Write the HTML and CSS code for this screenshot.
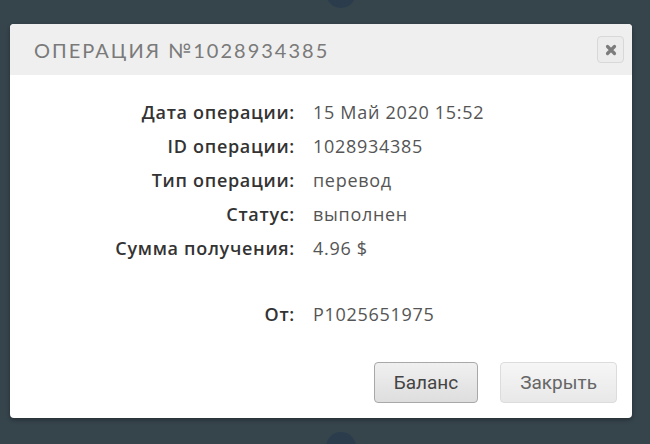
FILE: index.html
```html
<!DOCTYPE html>
<html lang="ru">
<head>
    <meta charset="UTF-8">
    <title>Операция</title>
    <link rel="stylesheet" href="styles.css">
</head>
<body>
    <div class="backdrop">
        <div class="dot dot-top"></div>
        <div class="dot dot-bottom"></div>
        <div class="dialog">
            <div class="dialog-header">
                <h1>Операция №1028934385</h1>
                <button class="close-btn" aria-label="Закрыть">
                    <svg width="12" height="12" viewBox="0 0 12 12"><path d="M2.5 2.5 L9.5 9.5 M9.5 2.5 L2.5 9.5" stroke="#7c7c7c" stroke-width="3.2" stroke-linecap="round"/></svg>
                </button>
            </div>
            <div class="dialog-body">
                <div class="info">
                    <div class="label">Дата операции:</div><div class="value">15 Май 2020 15:52</div>
                    <div class="label">ID операции:</div><div class="value">1028934385</div>
                    <div class="label">Тип операции:</div><div class="value">перевод</div>
                    <div class="label">Статус:</div><div class="value">выполнен</div>
                    <div class="label">Сумма получения:</div><div class="value">4.96 $</div>
                    <div class="spacer"></div>
                    <div class="label">От:</div><div class="value">P1025651975</div>
                </div>
            </div>
            <div class="dialog-footer">
                <button class="btn btn-active">Баланс</button>
                <button class="btn">Закрыть</button>
            </div>
        </div>
    </div>
</body>
</html>
```

FILE: styles.css
```css
html, body {
    margin: 0;
    padding: 0;
}

body {
    background-color: #36444c;
    font-family: 'Open Sans', sans-serif;
    width: 650px;
    height: 444px;
    overflow: hidden;
}

.backdrop {
    position: relative;
    height: 444px;
    padding: 24px 18px 0 10px;
    box-sizing: border-box;
}

.dot {
    position: absolute;
    width: 30px;
    height: 30px;
    border-radius: 50%;
    background: #2b3d4d;
    left: 326px;
}

.dot-top {
    top: -22px;
}

.dot-bottom {
    top: 432px;
}

.dialog {
    position: relative;
    background: white;
    border-radius: 4px;
    height: 394px;
    display: flex;
    flex-direction: column;
    box-shadow: 0 2px 4px rgba(0, 0, 0, 0.3);
}

.dialog-header {
    background: #efefef;
    height: 51px;
    border-radius: 4px 4px 0 0;
    display: flex;
    align-items: center;
    justify-content: space-between;
    padding: 0 8px 0 24px;
}

.dialog-header h1 {
    margin: 0;
    font-family: 'Lato', sans-serif;
    font-weight: 400;
    font-size: 20px;
    letter-spacing: 2px;
    text-transform: uppercase;
    color: #7a7a7a;
}

.close-btn {
    width: 27px;
    height: 27px;
    background: #ececec;
    border: 1px solid #d8d8d8;
    border-radius: 4px;
    padding: 0;
    display: flex;
    align-items: center;
    justify-content: center;
}

.dialog-body {
    flex: 1;
    padding-top: 25px;
}

.info {
    display: grid;
    grid-template-columns: 285px auto;
    column-gap: 18px;
    row-gap: 10px;
    font-size: 18px;
    letter-spacing: 0.7px;
    line-height: 24px;
}

.label {
    text-align: right;
    color: #333;
    font-weight: 600;
}

.value {
    color: #555;
}

.spacer {
    grid-column: 1 / 3;
    height: 22px;
}

.dialog-footer {
    display: flex;
    justify-content: flex-end;
    gap: 22px;
    padding: 0 15px 15px 0;
}

.btn {
    font-family: 'Roboto', sans-serif;
    font-size: 19px;
    color: #666;
    height: 41px;
    padding: 0 19px;
    background: linear-gradient(#f6f6f6, #e8e8e8);
    border: 1px solid #dcdcdc;
    border-radius: 4px;
}

.btn-active {
    color: #444;
    border-color: #a8a8a8;
    background: linear-gradient(#f0f0f0, #dedede);
}
```
